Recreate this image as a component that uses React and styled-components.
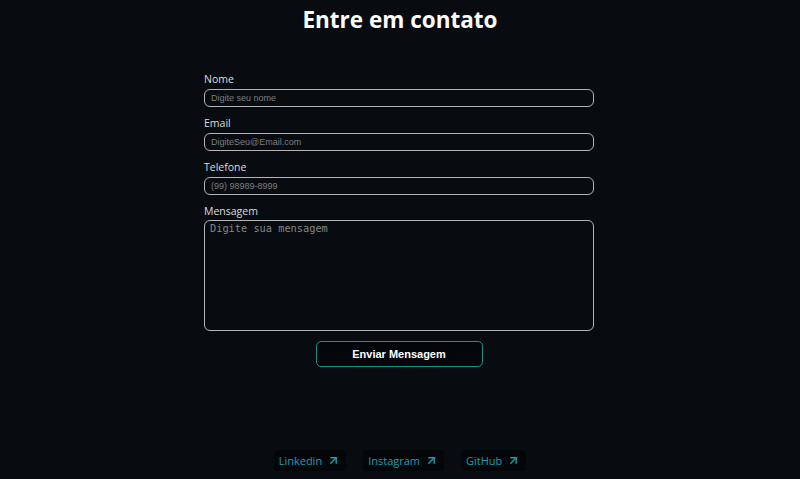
import styled, { createGlobalStyle } from 'styled-components';
import { ArrowUpRight } from 'lucide-react';

const links = ['Linkedin', 'Instagram', 'GitHub'];

function App() {
  return (
    <>
      <Global />
      <Page>
        <Title>Entre em contato</Title>
        <Form onSubmit={(e) => e.preventDefault()}>
          <Field>
            <Label>Nome</Label>
            <Input placeholder='Digite seu nome' />
          </Field>
          <Field>
            <Label>Email</Label>
            <Input placeholder='DigiteSeu@Email.com' />
          </Field>
          <Field>
            <Label>Telefone</Label>
            <Input placeholder='(99) 98989-8999' />
          </Field>
          <Field>
            <Label>Mensagem</Label>
            <TextArea placeholder='Digite sua mensagem' />
          </Field>
          <Submit type='submit'>Enviar Mensagem</Submit>
        </Form>
        <Footer>
          {links.map((name) => (
            <Chip key={name} href='#'>
              {name}
              <ArrowUpRight size={13} strokeWidth={2.6} />
            </Chip>
          ))}
        </Footer>
      </Page>
    </>
  );
}

const Global = createGlobalStyle`
  html, body {
    margin: 0;
    padding: 0;
    background: #080c10;
  }
  * {
    box-sizing: border-box;
  }
`;

const Page = styled.div`
  display: flex;
  flex-direction: column;
  align-items: center;

  height: 479px;
  padding-top: 3px;

  font-family: 'Open Sans', sans-serif;
  color: #fff;
`;

const Title = styled.h1`
  margin: 0;

  font-size: 22.5px;
  font-weight: 700;
  line-height: 33px;
`;

const Form = styled.form`
  display: flex;
  flex-direction: column;
  align-items: center;

  width: 390px;
  margin: 36px 0 0 -2px;
`;

const Field = styled.label`
  display: flex;
  flex-direction: column;
  gap: 2px;

  width: 100%;
  margin-bottom: 9px;
`;

const Label = styled.span`
  font-size: 10.5px;
  line-height: 15px;
  color: #dcdcdc;
`;

const Input = styled.input`
  width: 100%;
  height: 18px;
  padding: 0 6px;

  border: 1px solid #b4b4b4;
  border-radius: 6px;
  outline: none;
  background: transparent;

  font-family: 'Liberation Sans', Arial, sans-serif;
  font-size: 9px;
  color: #ddd;

  &::placeholder {
    color: #7d7d7d;
  }
`;

const TextArea = styled.textarea`
  width: 100%;
  height: 111px;
  padding: 1px 5px;
  margin-top: -1px;
  resize: none;

  border: 1px solid #b4b4b4;
  border-radius: 6px;
  outline: none;
  background: transparent;

  font-family: 'DejaVu Sans Mono', monospace;
  font-size: 10.3px;
  color: #ddd;

  &::placeholder {
    color: #858585;
  }
`;

const Submit = styled.button`
  width: 167px;
  height: 26px;
  margin-top: 1px;

  border: 1px solid #1a8f88;
  border-radius: 5px;
  background: #03060a;

  font-family: 'Liberation Sans', Arial, sans-serif;
  font-size: 11px;
  font-weight: 700;
  color: #fff;
  cursor: pointer;
`;

const Footer = styled.nav`
  display: flex;
  gap: 17px;

  margin-top: auto;
  margin-bottom: 8px;
`;

const Chip = styled.a`
  display: flex;
  align-items: center;
  gap: 5px;

  height: 21px;
  padding: 0 6px 0 5px;

  border-radius: 4px;
  background: #03070a;

  font-size: 11px;
  font-weight: 500;
  color: #1b9db0;
  text-decoration: none;
`;

export default App;
